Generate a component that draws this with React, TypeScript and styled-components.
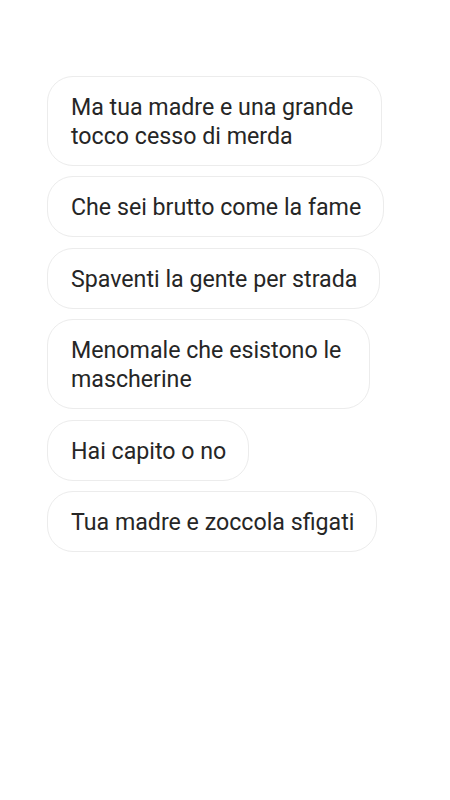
import styled, { createGlobalStyle } from "styled-components";

const GlobalStyle = createGlobalStyle`
  html, body {
    margin: 0;
    background: #ffffff;
  }
`;

const Screen = styled.div`
  width: 450px;
  height: 800px;
  box-sizing: border-box;
  padding: 76px 0 0 47px;
  background: #ffffff;
  font-family: Roboto, "Noto Sans", sans-serif;
`;

const MessageList = styled.div`
  display: flex;
  flex-direction: column;
  align-items: flex-start;
  gap: 10.4px;
`;

const Bubble = styled.div<{ $multi?: boolean }>`
  display: flex;
  flex-direction: column;
  box-sizing: border-box;
  padding: 16px ${(p) => (p.$multi ? "28px" : "22px")} 14px 23px;
  border: 1px solid #ececec;
  border-radius: 26px;
  font-size: 23.2px;
  line-height: 29px;
  color: #262626;
  white-space: nowrap;
`;

const messages: string[][] = [
  ["Ma tua madre e una grande", "tocco cesso di merda"],
  ["Che sei brutto come la fame"],
  ["Spaventi la gente per strada"],
  ["Menomale che esistono le", "mascherine"],
  ["Hai capito o no"],
  ["Tua madre e zoccola sfigati"],
];

export default function App() {
  return (
    <>
      <GlobalStyle />
      <Screen>
        <MessageList>
          {messages.map((lines) => (
            <Bubble key={lines[0]} $multi={lines.length > 1}>
              {lines.map((line) => (
                <span key={line}>{line}</span>
              ))}
            </Bubble>
          ))}
        </MessageList>
      </Screen>
    </>
  );
}
